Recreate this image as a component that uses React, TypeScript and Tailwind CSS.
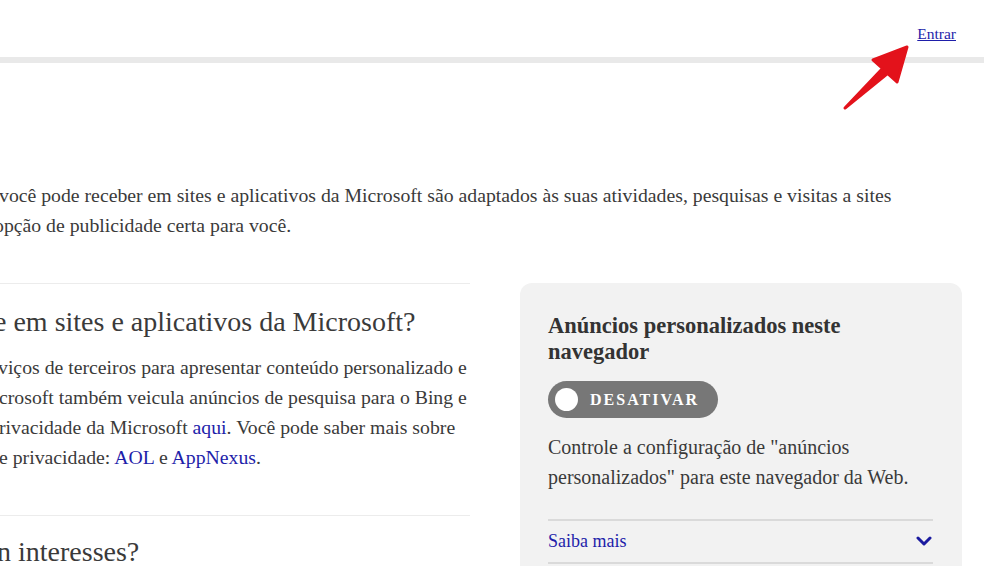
import React from "react";

const serif = { fontFamily: '"Liberation Serif", "Times New Roman", serif' };

export default function App() {
  return (
    <div className="relative w-[984px] h-[566px] overflow-hidden bg-white text-[#3a3a3a]" style={serif}>
      <header className="h-[57px] flex justify-end items-start pt-[25px] pr-[28px]">
        <a href="#" className="text-[15.5px] leading-[18px] text-[#1e1eaa] underline">Entrar</a>
      </header>
      <div className="h-[6px] bg-[#e9e9e9]" />

      <main className="pt-[117px]">
        <div className="text-[19.75px] leading-[30px] whitespace-nowrap">
          <div className="ml-[-1px]">você pode receber em sites e aplicativos da Microsoft são adaptados às suas atividades, pesquisas e visitas a sites</div>
          <div className="ml-[-6px]">opção de publicidade certa para você.</div>
        </div>

        <div className="mt-[43px] flex items-start">
          <section className="w-[470px] border-t border-[#ececec]">
            <h2 className="mt-[20px] ml-[-6px] text-[28px] leading-[36px] whitespace-nowrap">e em sites e aplicativos da Microsoft?</h2>
            <div className="mt-[12px] text-[19.75px] leading-[30px] whitespace-nowrap">
              <div className="ml-[-2px]">viços de terceiros para apresentar conteúdo personalizado e</div>
              <div className="ml-[-1px]">crosoft também veicula anúncios de pesquisa para o Bing e</div>
              <div className="ml-[-1px]">rivacidade da Microsoft <a href="#" className="text-[#1e1eaa]">aqui</a>. Você pode saber mais sobre</div>
              <div className="ml-[-1px]">e privacidade: <a href="#" className="text-[#1e1eaa]">AOL</a> e <a href="#" className="text-[#1e1eaa]">AppNexus</a>.</div>
            </div>
            <div className="mt-[43px] border-t border-[#ececec]" />
            <h2 className="mt-[18px] ml-[-3px] text-[28px] leading-[36px] whitespace-nowrap">n interesses?</h2>
          </section>

          <aside className="ml-[50px] w-[442px] h-[320px] rounded-[12px] bg-[#f2f2f2] pl-[28px] pr-[29px] pt-[30px]">
            <h3 className="text-[22.5px] leading-[26px] font-bold text-[#333]">Anúncios personalizados neste<br />navegador</h3>
            <button className="mt-[16px] w-[170px] h-[37px] rounded-full bg-[#777777] flex items-center pl-[7px]">
              <span className="w-[23px] h-[23px] rounded-full bg-white" />
              <span className="ml-[12px] text-[16px] font-bold tracking-[2px] text-white" style={serif}>DESATIVAR</span>
            </button>
            <p className="mt-[14px] text-[20px] leading-[30px]">Controle a configuração de "anúncios<br />personalizados" para este navegador da Web.</p>
            <div className="mt-[27px] border-t-2 border-[#dadada]" />
            <div className="h-[41px] flex items-center justify-between">
              <a href="#" className="text-[18px] leading-[22px] text-[#1e1eaa] -mt-[2px]">Saiba mais</a>
              <svg width="16" height="12" viewBox="0 0 16 12" className="mr-[1px] -mt-[2px]">
                <path d="M2 3 L8 9 L14 3" fill="none" stroke="#1b1ba0" strokeWidth="3" strokeLinecap="round" strokeLinejoin="round" />
              </svg>
            </div>
            <div className="border-t-2 border-[#dadada]" />
          </aside>
        </div>
      </main>

      <svg className="absolute top-0 left-0 pointer-events-none" width="984" height="566" viewBox="0 0 984 566">
        <polygon
          points="845,108 882.5,68.5 873,60 907,47 897,82 887.5,73.5"
          fill="#e3121b"
          stroke="#e3121b"
          strokeWidth="3"
          strokeLinejoin="round"
        />
      </svg>
    </div>
  );
}
